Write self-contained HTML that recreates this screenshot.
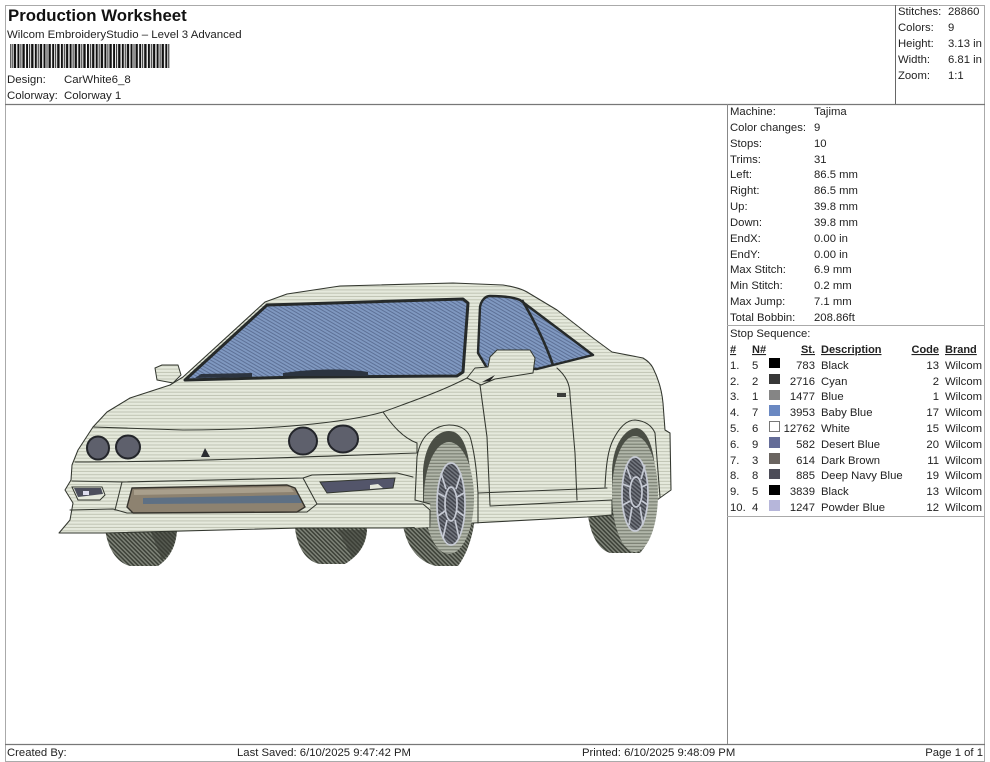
<!DOCTYPE html>
<html>
<head>
<meta charset="utf-8">
<style>
html,body{margin:0;padding:0;background:#fff;width:990px;height:762px;overflow:hidden}
svg{display:block;filter:blur(.3px)}
text{font-family:"Liberation Sans",Arial,sans-serif;font-size:11.3px;fill:#222}
.h{font-size:11.45px}
.b{font-weight:bold;text-decoration:underline;font-size:11px}
.r{text-anchor:end}
.ln{fill:none;stroke:#33372f;stroke-width:1.05;stroke-linejoin:round;stroke-linecap:round}
</style>
</head>
<body>
<svg width="990" height="762" viewBox="0 0 990 762" xmlns="http://www.w3.org/2000/svg">
<defs>
<pattern id="body" width="4" height="3.3" patternUnits="userSpaceOnUse">
<rect width="4" height="3.3" fill="#e5e9dc"/><rect y="2.3" width="4" height="1" fill="#c0c4b4"/>
</pattern>
<pattern id="glass" width="3" height="3" patternUnits="userSpaceOnUse" patternTransform="rotate(-60)">
<rect width="3" height="3" fill="#7f98c0"/><rect width="1" height="3" fill="#5d7096"/>
</pattern>
<pattern id="tire" width="3" height="3" patternUnits="userSpaceOnUse" patternTransform="rotate(-45)">
<rect width="3" height="3" fill="#7e8378"/><rect width="1.5" height="3" fill="#3c4037"/>
</pattern>
<pattern id="face" width="4" height="3.2" patternUnits="userSpaceOnUse">
<rect width="4" height="3.2" fill="#b1b6a9"/><rect y="2" width="4" height="1.2" fill="#7c8175"/>
</pattern>
<pattern id="hub" width="3" height="3" patternUnits="userSpaceOnUse" patternTransform="rotate(-50)">
<rect width="3" height="3" fill="#73777f"/><rect width="1.5" height="3" fill="#43454d"/>
</pattern>
<pattern id="bar" width="8.7" height="24" patternUnits="userSpaceOnUse">
<rect x="0" width="2" height="24" fill="#111"/><rect x="3" width="1" height="24" fill="#222"/><rect x="5" width="2.4" height="24" fill="#111"/>
</pattern>
</defs>

<!-- Frame -->
<g fill="none" stroke="#999" stroke-width="1">
<rect x="5.5" y="5.5" width="979" height="756" stroke="#aaa"/>
<line x1="5" y1="104.5" x2="985" y2="104.5" stroke="#777" stroke-width="1.2"/>
<line x1="895.5" y1="5" x2="895.5" y2="104" stroke="#666"/>
<line x1="727.5" y1="104" x2="727.5" y2="744" stroke="#888"/>
<line x1="727" y1="325.5" x2="985" y2="325.5" stroke="#aaa"/>
<line x1="727" y1="516.5" x2="985" y2="516.5" stroke="#aaa"/>
<line x1="5" y1="744.5" x2="985" y2="744.5" stroke="#777" stroke-width="1.2"/>
</g>

<!-- Header -->
<text x="8" y="21" style="font-size:16.8px;font-weight:bold;fill:#111">Production Worksheet</text>
<text x="7" y="38" class="h">Wilcom EmbroideryStudio – Level 3 Advanced</text>
<rect x="10" y="44" width="160" height="24" fill="url(#bar)"/>
<text x="7" y="83" class="h">Design:</text><text x="64" y="83" class="h">CarWhite6_8</text>
<text x="7" y="99" class="h">Colorway:</text><text x="64" y="99" class="h">Colorway 1</text>

<!-- Summary -->
<text x="898" y="15">Stitches:</text><text x="948" y="15">28860</text>
<text x="898" y="31">Colors:</text><text x="948" y="31">9</text>
<text x="898" y="47">Height:</text><text x="948" y="47">3.13 in</text>
<text x="898" y="63">Width:</text><text x="948" y="63">6.81 in</text>
<text x="898" y="79">Zoom:</text><text x="948" y="79">1:1</text>

<!-- Machine info -->
<text x="730" y="115">Machine:</text><text x="814" y="115">Tajima</text>
<text x="730" y="131">Color changes:</text><text x="814" y="131">9</text>
<text x="730" y="147">Stops:</text><text x="814" y="147">10</text>
<text x="730" y="163">Trims:</text><text x="814" y="163">31</text>
<text x="730" y="178">Left:</text><text x="814" y="178">86.5 mm</text>
<text x="730" y="194">Right:</text><text x="814" y="194">86.5 mm</text>
<text x="730" y="210">Up:</text><text x="814" y="210">39.8 mm</text>
<text x="730" y="226">Down:</text><text x="814" y="226">39.8 mm</text>
<text x="730" y="242">EndX:</text><text x="814" y="242">0.00 in</text>
<text x="730" y="258">EndY:</text><text x="814" y="258">0.00 in</text>
<text x="730" y="273">Max Stitch:</text><text x="814" y="273">6.9 mm</text>
<text x="730" y="289">Min Stitch:</text><text x="814" y="289">0.2 mm</text>
<text x="730" y="305">Max Jump:</text><text x="814" y="305">7.1 mm</text>
<text x="730" y="321">Total Bobbin:</text><text x="814" y="321">208.86ft</text>

<!-- Stop sequence -->
<text x="730" y="337">Stop Sequence:</text>
<text x="730" y="353" class="b">#</text>
<text x="752" y="353" class="b">N#</text>
<text x="815" y="353" class="b r">St.</text>
<text x="821" y="353" class="b">Description</text>
<text x="939" y="353" class="b r">Code</text>
<text x="945" y="353" class="b">Brand</text>

<g>
<text x="730" y="369">1.</text><text x="752" y="369">5</text><rect x="769" y="358" width="11" height="10" fill="#000"/><text x="815" y="369" class="r">783</text><text x="821" y="369">Black</text><text x="939" y="369" class="r">13</text><text x="945" y="369">Wilcom</text>
<text x="730" y="385">2.</text><text x="752" y="385">2</text><rect x="769" y="374" width="11" height="10" fill="#383838"/><text x="815" y="385" class="r">2716</text><text x="821" y="385">Cyan</text><text x="939" y="385" class="r">2</text><text x="945" y="385">Wilcom</text>
<text x="730" y="400">3.</text><text x="752" y="400">1</text><rect x="769" y="390" width="11" height="10" fill="#858585"/><text x="815" y="400" class="r">1477</text><text x="821" y="400">Blue</text><text x="939" y="400" class="r">1</text><text x="945" y="400">Wilcom</text>
<text x="730" y="416">4.</text><text x="752" y="416">7</text><rect x="769" y="405" width="11" height="11" fill="#6a88c2"/><text x="815" y="416" class="r">3953</text><text x="821" y="416">Baby Blue</text><text x="939" y="416" class="r">17</text><text x="945" y="416">Wilcom</text>
<text x="730" y="432">5.</text><text x="752" y="432">6</text><rect x="769.5" y="421.5" width="10" height="10" fill="#fff" stroke="#777"/><text x="815" y="432" class="r">12762</text><text x="821" y="432">White</text><text x="939" y="432" class="r">15</text><text x="945" y="432">Wilcom</text>
<text x="730" y="448">6.</text><text x="752" y="448">9</text><rect x="769" y="437" width="11" height="11" fill="#646c98"/><text x="815" y="448" class="r">582</text><text x="821" y="448">Desert Blue</text><text x="939" y="448" class="r">20</text><text x="945" y="448">Wilcom</text>
<text x="730" y="464">7.</text><text x="752" y="464">3</text><rect x="769" y="453" width="11" height="11" fill="#6a6460"/><text x="815" y="464" class="r">614</text><text x="821" y="464">Dark Brown</text><text x="939" y="464" class="r">11</text><text x="945" y="464">Wilcom</text>
<text x="730" y="479">8.</text><text x="752" y="479">8</text><rect x="769" y="469" width="11" height="10" fill="#4c4c58"/><text x="815" y="479" class="r">885</text><text x="821" y="479">Deep Navy Blue</text><text x="939" y="479" class="r">19</text><text x="945" y="479">Wilcom</text>
<text x="730" y="495">9.</text><text x="752" y="495">5</text><rect x="769" y="485" width="11" height="10" fill="#000"/><text x="815" y="495" class="r">3839</text><text x="821" y="495">Black</text><text x="939" y="495" class="r">13</text><text x="945" y="495">Wilcom</text>
<text x="730" y="511">10.</text><text x="752" y="511">4</text><rect x="769" y="500" width="11" height="11" fill="#b6b6da"/><text x="815" y="511" class="r">1247</text><text x="821" y="511">Powder Blue</text><text x="939" y="511" class="r">12</text><text x="945" y="511">Wilcom</text>
</g>

<!-- Footer -->
<text x="7" y="756">Created By:</text>
<text x="237" y="756">Last Saved: 6/10/2025 9:47:42 PM</text>
<text x="582" y="756">Printed: 6/10/2025 9:48:09 PM</text>
<text x="983" y="756" class="r">Page 1 of 1</text>

<!-- Car: tires behind body -->
<path d="M105 528 C107 548 117 563 130 566 L158 566 C170 558 177 545 177 528Z" fill="url(#tire)"/>
<path d="M150 530 L177 530 C175 545 170 555 162 560Z" fill="#3a3e36" opacity=".6"/>
<path d="M295 528 C297 548 307 562 320 564 L345 564 C358 556 367 545 367 528Z" fill="url(#tire)"/>
<path d="M338 530 L367 530 C365 545 358 555 352 558Z" fill="#3a3e36" opacity=".6"/>
<path d="M587 500 C587 528 596 549 610 553 L640 553 C652 540 657 515 657 490 L640 440 L600 480Z" fill="url(#tire)"/>
<path d="M402 515 C403 543 417 562 436 566 L458 566 C470 550 476 525 476 500 L460 440 L420 480Z" fill="url(#tire)"/>

<!-- Body -->
<path d="M59 533 L70 520 L73 503 L65 490 L71 480 L72 465 L78 450 L93 427 L107 412 L130 398 L170 385 L183 377 L265 302 L287 294 L340 286 L453 283 L503 285 C515 287 522 289 527 292 L557 310 L593 338 L612 352 L643 358 C648 361 651 364 653 368 C659 380 662 392 663 403 L665 430 L670 433 L671 490 L657 500 L612 500 L612 515 L587 517 L473 523 L430 527 L400 528 L300 528 L103 533Z" fill="url(#body)" stroke="#33372f" stroke-width="1.05" stroke-linejoin="round"/>

<!-- Wheel wells and tire faces -->
<path d="M423 470 C425 445 436 431 449 431 C462 431 468 448 470 470 L470 510 L423 510Z" fill="#4a4e45"/>
<path d="M612 470 C613 445 625 428 637 428 C648 430 654 450 655 470 L655 500 L612 500Z" fill="#4a4e45"/>
<ellipse cx="449" cy="498" rx="25" ry="56" fill="url(#face)"/>
<ellipse cx="635" cy="494" rx="23" ry="58" fill="url(#face)"/>
<path d="M415 500 L430 504 L431 527 L415 528 L405 510Z" fill="url(#body)"/>

<!-- Front rim -->
<g fill="none" stroke="#c6cad4" stroke-width="1.7">
<ellipse cx="451" cy="504" rx="14" ry="41" fill="url(#hub)"/>
<ellipse cx="451" cy="504" rx="6" ry="17"/>
<path d="M446 489 L441 473 M456 489 L461 473 M445 497 L438 493 M457 497 L464 493 M445 511 L438 516 M457 511 L464 516 M447 520 L443 538 M455 520 L459 538"/>
</g>
<!-- Rear rim -->
<g fill="none" stroke="#c6cad4" stroke-width="1.7">
<ellipse cx="635" cy="494" rx="13" ry="37" fill="url(#hub)"/>
<ellipse cx="636" cy="492" rx="6" ry="15"/>
<path d="M631 479 L626 465 M641 479 L645 465 M630 487 L623 484 M642 487 L648 484 M630 501 L623 505 M642 501 L648 505 M632 507 L629 525 M640 507 L643 525"/>
</g>

<!-- Windows -->
<path d="M185 380 L267 305 L463 299 L468 303 L463 372 L457 376 L300 377Z" fill="url(#glass)" stroke="#262a2a" stroke-width="3" stroke-linejoin="round"/>
<path d="M201 374 L252 373 L252 377 L195 378Z M283 373 C310 369 345 368 368 372 L368 376 L283 376Z" fill="#2c3440"/>
<path d="M478 353 L480 307 C481 301 485 296 490 296 C503 296 513 297 520 300 L593 355 L537 369 L487 368Z" fill="url(#glass)" stroke="#262a2a" stroke-width="2.4" stroke-linejoin="round"/>
<path d="M522 300 C535 322 546 345 553 365" fill="none" stroke="#262a2a" stroke-width="2.6"/>

<!-- Side mirror -->
<path d="M467 378 L475 368 L488 367 L490 357 L497 350 L530 350 L535 358 L533 373 L495 379 L481 385Z" fill="url(#body)" stroke="#33372f" stroke-width="1" stroke-linejoin="round"/>
<path d="M482 382 L495 375 L490 381Z" fill="#222"/>
<!-- Left mirror -->
<path d="M155 368 L162 365 L178 365 L181 375 L173 383 L157 380Z" fill="url(#body)" stroke="#33372f" stroke-width="1" stroke-linejoin="round"/>

<!-- Body lines -->
<g>
<path class="ln" d="M480 385 L487 437 L490 505"/>
<path class="ln" d="M557 368 C566 376 570 384 570 395 L575 453 L577 500"/>
<path class="ln" d="M478 493 L607 488"/>
<path class="ln" d="M490 506 L612 500"/>
<path class="ln" d="M467 378 C440 392 410 402 383 412 C345 423 270 430 183 430 L93 427"/>
<path class="ln" d="M383 412 C392 425 403 438 417 443"/>
<path class="ln" d="M415 500 L417 457 C419 445 423 437 430 432 C437 427 443 425 449 425 C462 425 469 431 471 440 C476 460 477 478 478 493 L478 523"/>
<path class="ln" d="M605 487 C606 465 608 450 613 440 C619 428 626 420 635 420 C646 421 652 426 655 433 L660 497"/>
<path class="ln" d="M75 462 C180 462 300 457 417 453 L417 443"/>
<path class="ln" d="M72 481 L123 482 L303 478 L312 475 L397 473 L413 477"/>
<path class="ln" d="M70 510 L113 509 L127 513 L307 512 L317 504 L423 504 L430 510 L430 527"/>
<path class="ln" d="M122 482 L115 510"/>
<path class="ln" d="M303 478 L317 504"/>
<path class="ln" d="M415 500 L430 504"/>
</g>

<!-- Intake -->
<path d="M132 488 L287 485 L295 488 L305 507 L297 512 L133 513 L127 507Z" fill="#8d8270" stroke="#35332c" stroke-width="1.4" stroke-linejoin="round"/>
<path d="M134 490 L290 487 L294 492 L134 495Z" fill="#a99f8c"/>
<path d="M143 498 L298 495 L302 503 L143 504Z" fill="#5e7084"/>

<!-- Fog lights -->
<path d="M320 482 L395 478 L393 488 L327 493Z" fill="#53556a" stroke="#33372f" stroke-width="1"/>
<path d="M370 485 L378 484 L383 488 L370 489Z" fill="#e5e8dc"/>
<path d="M72 487 L102 487 L105 495 L100 500 L78 500Z" fill="#e5e9dc" stroke="#33372f" stroke-width="1"/>
<path d="M74 488 L101 488 L103 494 L78 497Z" fill="#4c4e5c"/>
<rect x="83" y="491" width="6" height="4" fill="#dde"/>

<!-- Headlights -->
<g stroke="#23252a" stroke-width="2" fill="#5e606c">
<ellipse cx="98" cy="448" rx="11" ry="11.5"/>
<ellipse cx="128" cy="447" rx="12" ry="11.5"/>
<ellipse cx="303" cy="441" rx="14" ry="13.5"/>
<ellipse cx="343" cy="439" rx="15" ry="13.5"/>
</g>
<path d="M201 457 L205 448 L210 457Z" fill="#2a2c30"/>
<rect x="557" y="393" width="9" height="4" fill="#3a3c3a"/>
</svg>
</body>
</html>
